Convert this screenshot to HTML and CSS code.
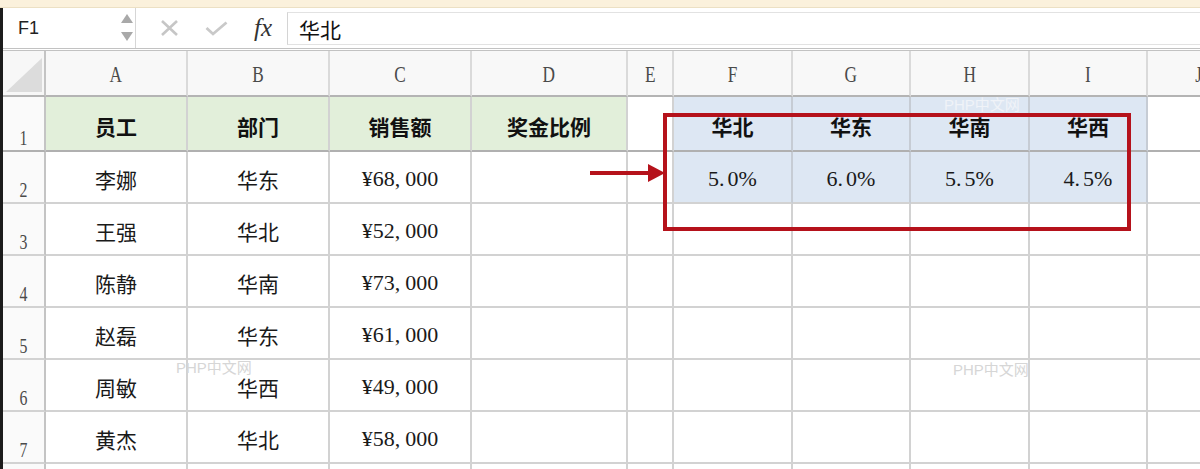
FILE: index.html
```html
<!DOCTYPE html>
<html lang="zh-CN">
<head>
<meta charset="utf-8">
<title>Sheet</title>
<link rel="stylesheet" href="styles.css">
</head>
<body>
<div class="app">
  <div class="topstrip"></div>
  <div class="main">
    <div class="fbar">
      <div class="namebox">
        <span class="ref">F1</span>
        <span class="spin">
          <svg width="12" height="28" viewBox="0 0 12 28"><polygon points="6,0 12,9 0,9" fill="#a9a9a9"/><polygon points="0,18 12,18 6,27" fill="#a9a9a9"/></svg>
        </span>
      </div>
      <div class="tools">
        <svg class="ico" width="19" height="16" viewBox="0 0 19 16"><path d="M2 1 L17 15 M17 1 L2 15" stroke="#c6c6c6" stroke-width="2.6" fill="none"/></svg>
        <svg class="ico" width="23" height="15" viewBox="0 0 23 15"><path d="M1.5 7 L8 13 L21.5 1.5" stroke="#c9c9c9" stroke-width="2.8" fill="none"/></svg>
        <span class="fx">fx</span>
      </div>
      <div class="finput">华北</div>
    </div>
    <div class="sheet">
      <div class="corner"><svg width="36" height="34" viewBox="0 0 36 34"><polygon points="0,34 36,34 36,0" fill="#dcdcdc"/></svg></div>
      <div class="ch"><span>A</span></div>
      <div class="ch"><span>B</span></div>
      <div class="ch"><span>C</span></div>
      <div class="ch"><span>D</span></div>
      <div class="ch"><span>E</span></div>
      <div class="ch"><span>F</span></div>
      <div class="ch"><span>G</span></div>
      <div class="ch"><span>H</span></div>
      <div class="ch"><span>I</span></div>
      <div class="ch"><span>J</span></div>

      <div class="rh r1"><span>1</span></div>
      <div class="c g hd r1">员工</div>
      <div class="c g hd r1">部门</div>
      <div class="c g hd r1">销售额</div>
      <div class="c g hd r1">奖金比例</div>
      <div class="c r1"></div>
      <div class="c b hd r1">华北</div>
      <div class="c b hd r1">华东</div>
      <div class="c b hd r1">华南</div>
      <div class="c b hd r1">华西</div>
      <div class="c r1"></div>

      <div class="rh"><span>2</span></div>
      <div class="c">李娜</div>
      <div class="c">华东</div>
      <div class="c num">¥68<span class="cm">,</span>000</div>
      <div class="c"></div>
      <div class="c"></div>
      <div class="c b num">5<span class="dot">.</span>0%</div>
      <div class="c b num">6<span class="dot">.</span>0%</div>
      <div class="c b num">5<span class="dot">.</span>5%</div>
      <div class="c b num">4<span class="dot">.</span>5%</div>
      <div class="c"></div>

      <div class="rh"><span>3</span></div>
      <div class="c">王强</div>
      <div class="c">华北</div>
      <div class="c num">¥52<span class="cm">,</span>000</div>
      <div class="c"></div><div class="c"></div><div class="c"></div><div class="c"></div><div class="c"></div><div class="c"></div><div class="c"></div>

      <div class="rh"><span>4</span></div>
      <div class="c">陈静</div>
      <div class="c">华南</div>
      <div class="c num">¥73<span class="cm">,</span>000</div>
      <div class="c"></div><div class="c"></div><div class="c"></div><div class="c"></div><div class="c"></div><div class="c"></div><div class="c"></div>

      <div class="rh"><span>5</span></div>
      <div class="c">赵磊</div>
      <div class="c">华东</div>
      <div class="c num">¥61<span class="cm">,</span>000</div>
      <div class="c"></div><div class="c"></div><div class="c"></div><div class="c"></div><div class="c"></div><div class="c"></div><div class="c"></div>

      <div class="rh"><span>6</span></div>
      <div class="c">周敏</div>
      <div class="c">华西</div>
      <div class="c num">¥49<span class="cm">,</span>000</div>
      <div class="c"></div><div class="c"></div><div class="c"></div><div class="c"></div><div class="c"></div><div class="c"></div><div class="c"></div>

      <div class="rh"><span>7</span></div>
      <div class="c">黄杰</div>
      <div class="c">华北</div>
      <div class="c num">¥58<span class="cm">,</span>000</div>
      <div class="c"></div><div class="c"></div><div class="c"></div><div class="c"></div><div class="c"></div><div class="c"></div><div class="c"></div>

      <div class="rh"></div>
      <div class="c"></div><div class="c"></div><div class="c"></div><div class="c"></div><div class="c"></div><div class="c"></div><div class="c"></div><div class="c"></div><div class="c"></div><div class="c"></div>
    </div>
  </div>

  <div class="wm wm1">PHP中文网</div>
  <div class="wm wm2">PHP中文网</div>
  <div class="wm wm3">PHP中文网</div>

  <div class="redbox"></div>
  <svg class="arrow" width="80" height="22" viewBox="0 0 80 22"><line x1="2" y1="11" x2="62" y2="11" stroke="#b5121b" stroke-width="4"/><polygon points="60,2 77,11 60,20" fill="#b5121b"/></svg>
</div>
</body>
</html>
```

FILE: styles.css
```css
* { box-sizing: border-box; }
html, body { margin: 0; padding: 0; }
body {
  width: 1200px;
  height: 469px;
  overflow: hidden;
  background: #ffffff;
  font-family: "Noto Sans CJK SC", "Noto Sans", sans-serif;
}
.app { position: relative; width: 1200px; height: 469px; overflow: hidden; }

.topstrip {
  height: 8px;
  background: #fbf1dc;
  border-bottom: 1px solid #ece0c4;
}

.main { border-left: 3px solid #1c1c1c; }

.fbar {
  height: 43px;
  display: flex;
  align-items: stretch;
  background: #ffffff;
  border-bottom: 3px double #c2c2c2;
}
.namebox {
  width: 133px;
  display: flex;
  align-items: center;
  justify-content: space-between;
  padding: 0 2px 0 15px;
  border-right: 1px solid #d6d6d6;
}
.ref {
  font-family: "Liberation Sans", "Noto Sans", sans-serif;
  font-size: 18px;
  color: #222;
}
.spin { display: flex; align-items: center; }
.tools {
  width: 151px;
  display: flex;
  align-items: center;
  gap: 26px;
  padding-left: 24px;
}
.fx {
  font-family: "Liberation Serif", serif;
  font-style: italic;
  font-size: 25px;
  color: #333;
}
.finput {
  flex: 1;
  margin: 4px 0 3px 0;
  border-left: 1px solid #d4d4d4;
  border-top: 1px solid #e2e2e2;
  border-bottom: 1px solid #e2e2e2;
  padding-left: 11px;
  display: flex;
  align-items: center;
  font-size: 21px;
  color: #111;
}

.sheet {
  display: grid;
  grid-template-columns: 43px 142px 142px 142px 156px 46px 119px 118px 119px 118px 104px;
  grid-template-rows: 46px 55px repeat(7, 52px);
}

.corner {
  background: #f7f7f7;
  border-right: 2px solid #c4c4c4;
  border-bottom: 2px solid #b4b4b4;
  display: flex;
  align-items: flex-end;
  justify-content: flex-end;
  padding: 0 2px 3px 0;
}
.ch {
  background: #f8f8f8;
  border-right: 2px solid #dadada;
  border-bottom: 2px solid #b4b4b4;
  display: flex;
  align-items: center;
  justify-content: center;
  padding-top: 2px;
}
.ch span, .rh span {
  display: inline-block;
  font-family: "Liberation Serif", serif;
  font-size: 24px;
  line-height: 24px;
  color: #4a4a4a;
  transform: scaleX(0.72);
}
.rh {
  background: #fafafa;
  border-right: 2px solid #c4c4c4;
  border-bottom: 2px solid #d2d2d2;
  display: flex;
  align-items: flex-end;
  justify-content: center;
  padding-bottom: 1px;
}
.rh span { font-size: 22px; line-height: 22px; }
.rh.r1 { border-bottom-color: #b0b0b0; }

.c {
  border-right: 2px solid #d2d2d2;
  border-bottom: 2px solid #d2d2d2;
  display: flex;
  align-items: center;
  justify-content: center;
  padding-top: 5px;
  font-size: 21px;
  line-height: 1;
  color: #1a1a1a;
  white-space: nowrap;
}
.c.r1 { border-bottom-color: #b0b0b0; }
.g { background: #e2efda; }
.b { background: #dde7f3; border-right-color: #c6ccd4; }
.hd { font-weight: 700; color: #111; }
.num {
  font-family: "Liberation Serif", serif;
  font-size: 22px;
  padding-top: 4px;
}
.cm { margin-right: 5px; }
.dot { margin-right: 3px; }

.wm {
  position: absolute;
  font-family: "Liberation Sans", "Noto Sans CJK SC", sans-serif;
  font-size: 15px;
  line-height: 1;
  color: #d6d6d6;
  white-space: nowrap;
}
.wm1 { left: 176px; top: 360px; }
.wm2 { left: 944px; top: 97px; color: #f0f3f8; }
.wm3 { left: 953px; top: 362px; }

.redbox {
  position: absolute;
  left: 663px;
  top: 113px;
  width: 468px;
  height: 118px;
  border: 4px solid #b5121b;
}
.arrow {
  position: absolute;
  left: 588px;
  top: 162px;
}
```
